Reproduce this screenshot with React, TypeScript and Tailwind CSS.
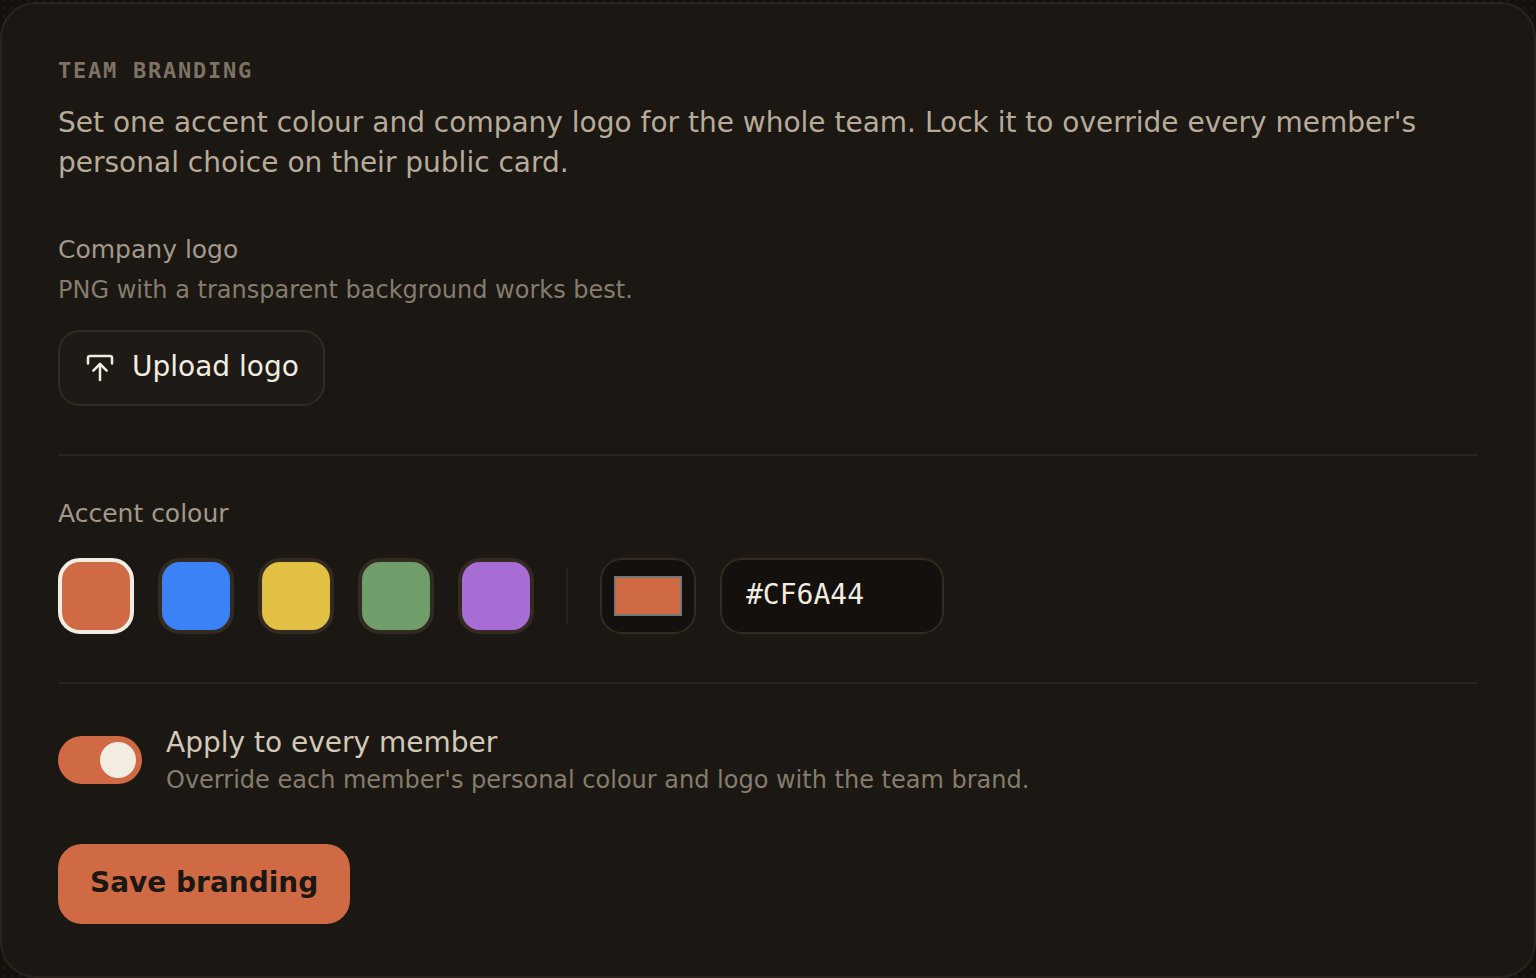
import { useState } from "react";

const SWATCHES = [
  { name: "Terracotta", value: "#CF6A44", fill: "bg-[#cf6a44]" },
  { name: "Blue", value: "#3B82F6", fill: "bg-[#3b82f6]" },
  { name: "Yellow", value: "#E2C044", fill: "bg-[#e2c044]" },
  { name: "Green", value: "#6F9E6B", fill: "bg-[#6f9e6b]" },
  { name: "Purple", value: "#A76DD4", fill: "bg-[#a76dd4]" },
];

function UploadIcon() {
  return (
    <svg
      className="size-8 shrink-0"
      viewBox="0 0 32 32"
      fill="none"
      stroke="currentColor"
      strokeWidth="2.5"
      strokeLinecap="round"
      strokeLinejoin="round"
      aria-hidden="true"
    >
      <path d="M4 11.5V6a2 2 0 0 1 2-2h20a2 2 0 0 1 2 2v5.5" />
      <path d="M16 28V12" />
      <path d="M9.3 18.7 16 12l6.7 6.7" />
    </svg>
  );
}

export default function App() {
  const [accent, setAccent] = useState("#CF6A44");
  const [applyAll, setApplyAll] = useState(true);

  return (
    <main className="min-h-screen bg-[#14100d] bg-[radial-gradient(circle,#1f1b17_1px,transparent_2px)] bg-size-[8px_8px] bg-position-[0_4px] pt-0.5 font-['DejaVu_Sans',sans-serif]">
      <section className="rounded-[36px] border-2 border-[#2b241d] bg-[#1b1712] px-14 pt-14 pb-13">
        <h2 className="font-['DejaVu_Sans_Mono',monospace] text-[22px] leading-[22px] font-bold tracking-[0.08em] text-[#7d7264] uppercase">
          Team branding
        </h2>
        <p className="mt-[21px] text-[28px] leading-10 text-[#b8ab9a]">
          Set one accent colour and company logo for the whole team. Lock it to override every member's personal choice
          on their public card.
        </p>

        <div className="mt-[47px]">
          <h3 className="text-[25px] leading-10 text-[#a3988a]">Company logo</h3>
          <p className="text-2xl leading-10 text-[#867c6d]">PNG with a transparent background works best.</p>
          <button
            type="button"
            className="mt-5 flex h-[76px] items-center gap-4 rounded-[22px] border-2 border-[#332a22] bg-[#1e1a15] px-6 text-[28px] leading-9 text-[#f3ece0]"
          >
            <UploadIcon />
            <span className="pb-0.5">Upload logo</span>
          </button>
        </div>

        <fieldset className="mt-12 border-t-2 border-[#2a231c] pt-[38px]">
          <label htmlFor="hex" className="block text-[25px] leading-10 text-[#a3988a]">
            Accent colour
          </label>
          <div className="mt-6 flex flex-wrap items-center gap-6">
            {SWATCHES.map((s) => (
              <button
                key={s.value}
                type="button"
                aria-label={s.name}
                aria-pressed={accent === s.value}
                onClick={() => setAccent(s.value)}
                className={`size-[76px] rounded-[22px] border-4 ${s.fill} ${
                  accent === s.value ? "border-[#f3ece0]" : "border-[#332a22]"
                }`}
              />
            ))}
            <span className="mx-2 h-14 w-0.5 bg-[#2a231c]" />
            <input
              type="color"
              aria-label="Custom colour"
              value={accent.toLowerCase()}
              onChange={(e) => setAccent(e.target.value.toUpperCase())}
              className="h-[76px] w-24 rounded-[22px] border-2 border-[#332a22] bg-[#14100d] px-3 py-4 [&::-webkit-color-swatch]:border-2 [&::-webkit-color-swatch]:border-[#777777] [&::-webkit-color-swatch-wrapper]:p-0"
            />
            <input
              id="hex"
              type="text"
              value={accent}
              onChange={(e) => setAccent(e.target.value)}
              className="h-[76px] w-56 rounded-[22px] border-2 border-[#332a22] bg-[#14100d] px-6 pb-1 font-['DejaVu_Sans_Mono',monospace] text-[28px] text-[#f3ece0]"
            />
          </div>
        </fieldset>

        <div className="mt-12 border-t-2 border-[#2a231c] pt-10">
          <label className="flex items-start gap-6">
            <input
              type="checkbox"
              role="switch"
              aria-label="Apply to every member"
              checked={applyAll}
              onChange={(e) => setApplyAll(e.target.checked)}
              className="mt-3 flex h-12 w-[84px] shrink-0 appearance-none items-center rounded-full bg-[#332a22] p-1.5 before:size-9 before:rounded-full before:bg-[#f3ece0] checked:justify-end checked:bg-[#cf6a44]"
            />
            <span className="flex flex-col">
              <span className="text-[28px] leading-[38px] text-[#d3c8b8]">Apply to every member</span>
              <span className="text-2xl leading-9 text-[#867c6d]">
                Override each member's personal colour and logo with the team brand.
              </span>
            </span>
          </label>
        </div>

        <button
          type="button"
          className="mt-[46px] flex h-20 items-center rounded-3xl bg-[#cf6a44] px-8 pb-0.5 text-[28px] leading-9 font-bold text-[#1b1712]"
        >
          Save branding
        </button>
      </section>
    </main>
  );
}
